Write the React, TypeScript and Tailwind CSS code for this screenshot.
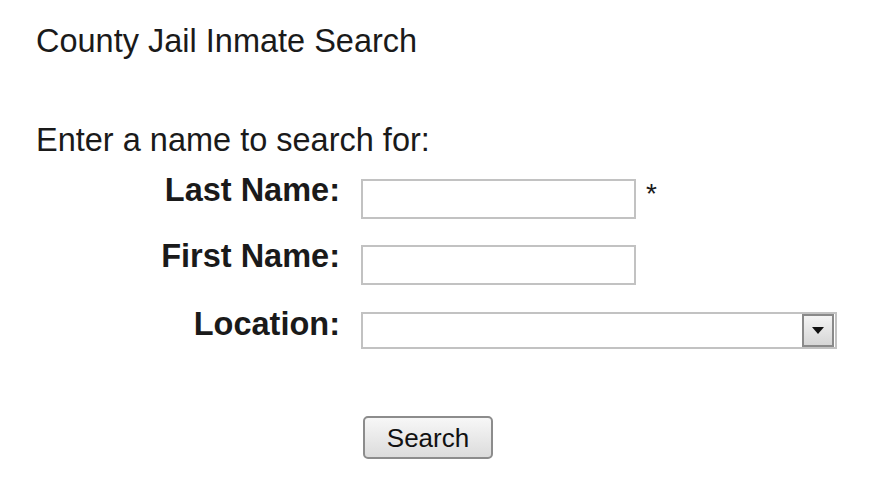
import React from "react";

const Field: React.FC<{ label: string; children: React.ReactNode; className?: string }> = ({
    label, children, className
}) => {
    return (
        <div className={"flex items-start " + (className ?? "")}>
            <div className="w-[304px] text-right font-bold text-[32.5px] leading-none">{label}</div>
            <div className="ml-[21px] flex items-start">{children}</div>
        </div>
    );
};

const App: React.FC = () => {
    return (
        <div className="w-[888px] h-[500px] bg-white text-[#1a1a1a] pl-[36px] pt-[25px] font-['Liberation_Sans',Arial,sans-serif]">
            <div className="text-[32.5px] leading-none">County Jail Inmate Search</div>
            <div className="text-[32.5px] leading-none mt-[66px]">Enter a name to search for:</div>

            <Field label="Last Name:" className="mt-[18px]">
                <input className="mt-[5px] h-[40px] w-[275px] border-2 border-[#c2c2c2] bg-white outline-none" />
                <span className="ml-[10px] mt-[6px] text-[28px] leading-none">*</span>
            </Field>

            <Field label="First Name:" className="mt-[21px]">
                <input className="mt-[5px] h-[40px] w-[275px] border-2 border-[#c2c2c2] bg-white outline-none" />
            </Field>

            <Field label="Location:" className="mt-[23px]">
                <div className="mt-[4px] h-[37px] w-[476px] border-2 border-[#c2c2c2] bg-white flex justify-end items-center pr-[1px]">
                    <div className="h-[33px] w-[32px] border-2 border-[#8a8a8a] bg-gradient-to-b from-[#f4f4f4] to-[#d6d6d6] flex items-center justify-center">
                        <svg width="12" height="8" viewBox="0 0 12 8">
                            <path d="M0 0 L12 0 L6 7 Z" fill="#111" />
                        </svg>
                    </div>
                </div>
            </Field>

            <div className="mt-[67px] ml-[327px]">
                <button className="h-[43px] w-[130px] rounded-[5px] border-2 border-[#8c8c8c] bg-gradient-to-b from-[#f7f7f7] to-[#dcdcdc] text-[26px] leading-none text-[#111]">
                    Search
                </button>
            </div>
        </div>
    );
};

export default App;
